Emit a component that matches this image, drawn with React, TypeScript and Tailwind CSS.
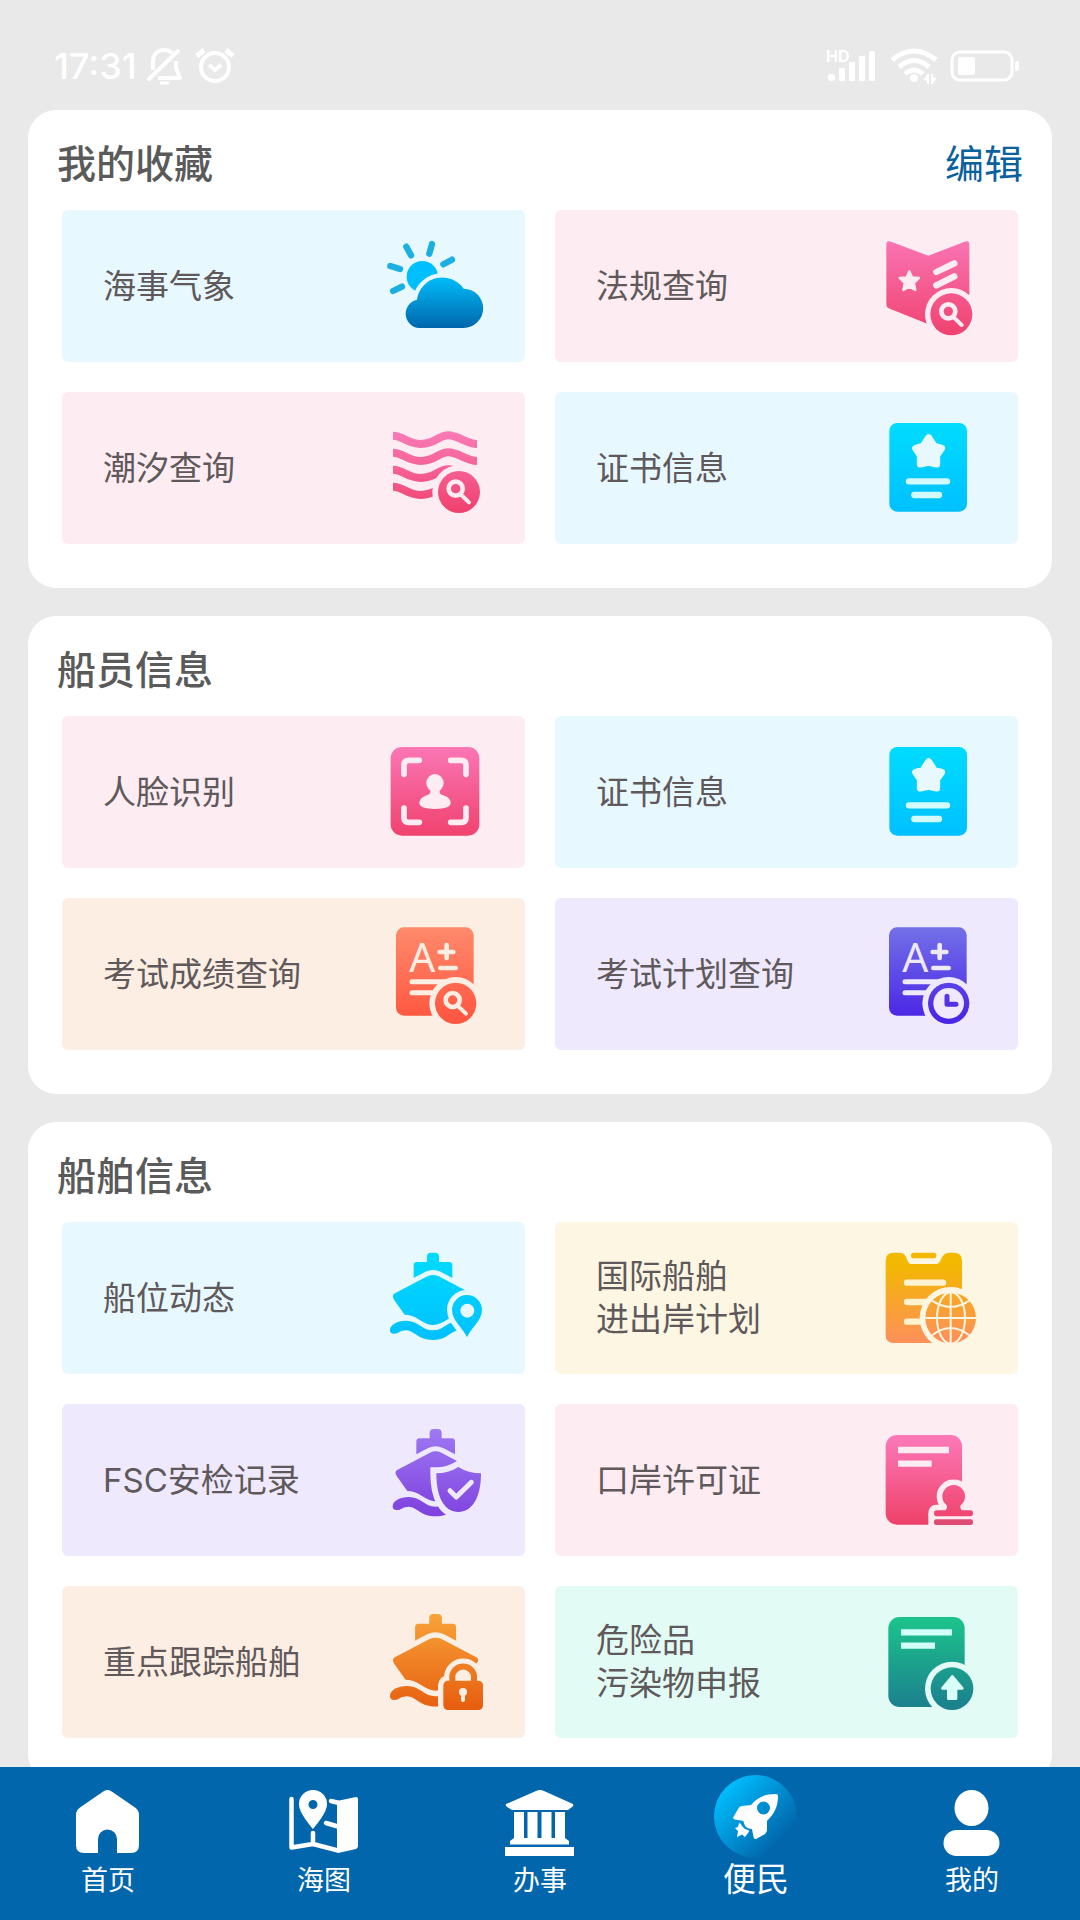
import { useId } from 'react';
import type { ReactNode } from 'react';

// tile backgrounds, also used for the gaps inside the icons
const SKY = '#e8f8ff';
const ROSE = '#fdecf2';
const PEACH = '#fdeee3';
const LILAC = '#eee9fd';
const CREAM = '#fdf6e3';
const MINT = '#e3fbf5';

type ArtProps = {
  viewBox: string;
  from: string;
  to: string;
  top: number;
  bottom: number;
  children: (fill: string) => ReactNode;
};

function Art({ viewBox, from, to, top, bottom, children }: ArtProps) {
  const id = useId();
  return (
    <svg viewBox={viewBox} className="size-[110px] shrink-0" fill="none" aria-hidden="true">
      <defs>
        <linearGradient id={id} gradientUnits="userSpaceOnUse" x1="0" x2="0" y1={top} y2={bottom}>
          <stop offset="0" stopColor={from} />
          <stop offset="1" stopColor={to} />
        </linearGradient>
      </defs>
      {children(`url(#${id})`)}
    </svg>
  );
}

function Magnifier({ x, y, color }: { x: number; y: number; color: string }) {
  return (
    <g transform={`translate(${x} ${y})`} stroke={color} strokeLinecap="round">
      <circle r="21" strokeWidth="14" />
      <path d="M17 19 L40 41" strokeWidth="12" />
    </g>
  );
}

function WeatherIcon() {
  return (
    <Art viewBox="120 63 330 330" from="#00c3ff" to="#0063a9" top={190} bottom={360}>
      {(fill) => (
        <>
          <path
            d="M276 102 L268 131 M199 110 L213 136 M151 168 L180 177 M159 243 L186 230 M310 163 L336 149"
            stroke="#1cb0e2"
            strokeWidth="19"
            strokeLinecap="round"
          />
          <circle cx="247" cy="200" r="47" fill="#00bfff" />
          <path
            d="M238 354 A43 43 0 0 1 231 269 A77 77 0 0 1 371 236 A59 59 0 0 1 370 354 Z"
            fill={fill}
            stroke={SKY}
            strokeWidth="26"
            style={{ paintOrder: 'stroke' }}
          />
        </>
      )}
    </Art>
  );
}

function LawIcon() {
  return (
    <Art viewBox="99 63 330 330" from="#f974b2" to="#f0426f" top={93} bottom={376}>
      {(fill) => (
        <>
          <path
            d="M139 104 Q139 90 153 95 L265 137 L374 95 Q388 90 388 104 V255 L330 310 L262 341 L146 295 Q139 291 139 283 Z"
            fill={fill}
          />
          <path
            d="M208 184 L216 202 L237 204 L222 219 L226 240 L208 230 L190 240 L194 219 L179 204 L200 202 Z"
            fill={ROSE}
            stroke={ROSE}
            strokeWidth="7"
            strokeLinejoin="round"
          />
          <path d="M289 186 L343 160 M289 226 L343 199" stroke={ROSE} strokeWidth="19" strokeLinecap="round" />
          <circle cx="334" cy="313" r="79" fill={ROSE} />
          <circle cx="334" cy="313" r="63" fill={fill} />
          <Magnifier x={325} y={304} color={ROSE} />
        </>
      )}
    </Art>
  );
}

function TideIcon() {
  const wave = 'c31 0 41 25 84 25 s52 -26 82 -26 s55 26 86 26';
  return (
    <Art viewBox="120 609 330 330" from="#fa7cb8" to="#f0426f" top={660} bottom={900}>
      {(fill) => (
        <>
          <path
            d={`M159 677 ${wave} M159 728 ${wave} M159 779 ${wave} M159 830 ${wave}`}
            stroke={fill}
            strokeWidth="24"
          />
          <circle cx="357" cy="846" r="80" fill={ROSE} />
          <circle cx="357" cy="846" r="63" fill={fill} />
          <Magnifier x={347} y={836} color={ROSE} />
        </>
      )}
    </Art>
  );
}

function CertificateIcon() {
  return (
    <Art viewBox="99 609 330 330" from="#00dcff" to="#00c0ff" top={639} bottom={905}>
      {(fill) => (
        <>
          <rect x="148" y="639" width="233" height="266" rx="24" fill={fill} />
          <path
            d="M266 683 L282 708 L305 715 L290 736 L290 762 L266 757 L241 762 L241 736 L227 715 L250 708 Z"
            fill={SKY}
            stroke={SKY}
            strokeWidth="21"
            strokeLinejoin="round"
          />
          <path d="M207 814 H321 M223 855 H297" stroke="#d3fbff" strokeWidth="19" strokeLinecap="round" />
        </>
      )}
    </Art>
  );
}

function FaceIcon() {
  return (
    <Art viewBox="120 81 330 330" from="#fa76b4" to="#f0426f" top={111} bottom={378}>
      {(fill) => (
        <>
          <rect x="152" y="111" width="266" height="266" rx="34" fill={fill} />
          <path
            d="M192 193 V165 Q192 151 206 151 H238 M332 151 H364 Q378 151 378 165 V193 M378 294 V323 Q378 337 364 337 H332 M238 337 H206 Q192 337 192 323 V294"
            stroke={ROSE}
            strokeWidth="17"
            strokeLinecap="round"
          />
          <ellipse cx="285" cy="219" rx="26" ry="27" fill={ROSE} />
          <path
            d="M270 236 H300 Q294 251 310 256 Q333 264 332 280 Q330 297 285 297 Q240 297 238 280 Q238 264 260 256 Q276 251 270 236 Z"
            fill={ROSE}
          />
        </>
      )}
    </Art>
  );
}

function ExamSheet({ fill, bg }: { fill: string; bg: string }) {
  return (
    <>
      <rect x="168" y="652" width="233" height="265" rx="24" fill={fill} />
      <text x="247" y="785" textAnchor="middle" fontSize="122" fill={bg} className="font-['Noto_Sans',sans-serif]">
        A
      </text>
      <path d="M320 705 V744 M299 726 H340 M301 774 H347" stroke={bg} strokeWidth="14" strokeLinecap="round" />
      <path d="M216 815 H320 M216 848 H290" stroke={bg} strokeWidth="15" strokeLinecap="round" />
      <circle cx="347" cy="880" r="79" fill={bg} />
      <circle cx="347" cy="880" r="62" fill={fill} />
    </>
  );
}

function ExamScoreIcon() {
  return (
    <Art viewBox="120 627 330 330" from="#ff8a6c" to="#ff5842" top={652} bottom={920}>
      {(fill) => (
        <>
          <ExamSheet fill={fill} bg={PEACH} />
          <Magnifier x={338} y={870} color={PEACH} />
        </>
      )}
    </Art>
  );
}

function ExamPlanIcon() {
  return (
    <Art viewBox="120 627 330 330" from="#7370e8" to="#4a26e6" top={652} bottom={925}>
      {(fill) => (
        <>
          <ExamSheet fill={fill} bg={LILAC} />
          <circle cx="347" cy="880" r="46" fill={LILAC} />
          <path d="M342 859 V883 H369" stroke={fill} strokeWidth="15" strokeLinecap="round" strokeLinejoin="round" />
        </>
      )}
    </Art>
  );
}

function Ship({ fill, bg }: { fill: string; bg: string }) {
  return (
    <>
      <path
        d="M221 175 V136 Q221 126 231 126 H261 V110 Q261 98 273 98 H285 Q297 98 297 110 V126 H327 Q337 126 337 136 V175 Z"
        fill={fill}
      />
      <path
        d="M159 232 Q157 224 165 220 L262 169 Q279 161 296 169 L393 220 Q401 224 399 232 L364 284 Q345 283 328 295 Q300 315 279 315 Q262 315 238 299 Q216 284 194 284 L162 239 Z"
        fill={fill}
        stroke={bg}
        strokeWidth="30"
        strokeLinejoin="round"
        style={{ paintOrder: 'stroke' }}
      />
      <path
        d="M150 330 C150 314 172 302 198 302 C235 302 245 331 279 331 C312 331 322 302 360 302 C386 302 405 314 405 330 L398 340 Q380 330 360 331 C328 332 325 360 279 360 C233 360 225 332 198 331 Q183 331 171 340 Q150 345 150 330 Z"
        fill={fill}
      />
    </>
  );
}

function ShipPositionIcon() {
  const pin = 'M381 352 C370 325 336 302 336 270 A45 45 0 0 1 426 270 C426 302 392 325 381 352 Z';
  return (
    <Art viewBox="120 69 330 330" from="#00dcff" to="#00c0ff" top={98} bottom={360}>
      {(fill) => (
        <>
          <Ship fill={fill} bg={SKY} />
          <path d="M350 332 L381 352 L440 352 V270 H350 Z" fill={SKY} />
          <path d={pin} fill={fill} stroke={SKY} strokeWidth="30" style={{ paintOrder: 'stroke' }} />
          <circle cx="382" cy="272" r="21" fill={SKY} />
        </>
      )}
    </Art>
  );
}

function InspectionIcon() {
  return (
    <Art viewBox="120 69 330 330" from="#9f7bf3" to="#7f42df" top={90} bottom={350}>
      {(fill) => (
        <>
          <g transform="translate(8 -17)">
            <Ship fill={fill} bg={LILAC} />
          </g>
          <path d="M318 337 L355 320 L440 260 V360 H335 Z" fill={LILAC} />
          <path
            d="M355 195 Q385 214 423 214 C423 290 395 330 355 330 S289 290 289 214 Q325 214 355 195 Z"
            fill={fill}
            stroke={LILAC}
            strokeWidth="36"
            style={{ paintOrder: 'stroke' }}
          />
          <path
            d="M330 266 L349 285 L394 241"
            stroke={LILAC}
            strokeWidth="15"
            strokeLinecap="round"
            strokeLinejoin="round"
          />
        </>
      )}
    </Art>
  );
}

function TrackedShipIcon() {
  const shackle = 'M337 292 V275 A33 33 0 0 1 402 275 V292';
  return (
    <Art viewBox="120 69 330 330" from="#f9a53a" to="#e65c0e" top={90} bottom={378}>
      {(fill) => (
        <>
          <g transform="translate(-9 -14) scale(1.06)">
            <Ship fill={fill} bg={PEACH} />
          </g>
          <path d={shackle} fill={PEACH} stroke={PEACH} strokeWidth="49" />
          <rect x="310" y="290" width="119" height="88" rx="14" fill={PEACH} stroke={PEACH} strokeWidth="32" />
          <path d={shackle} stroke={fill} strokeWidth="18" />
          <rect x="310" y="290" width="119" height="88" rx="14" fill={fill} />
          <circle cx="369" cy="324" r="12" fill={PEACH} />
          <path d="M369 326 V348" stroke={PEACH} strokeWidth="12" strokeLinecap="round" />
        </>
      )}
    </Art>
  );
}

function VoyagePlanIcon() {
  return (
    <Art viewBox="99 69 330 330" from="#f3b800" to="#fd9158" top={130} bottom={360}>
      {(fill) => (
        <>
          <path
            d="M161 98 H178 C206 98 196 132 216 132 H288 C308 132 298 98 330 98 H342 Q366 98 366 122 V369 H161 Q137 369 137 345 V122 Q137 98 161 98 Z"
            fill={fill}
          />
          <rect x="213" y="98" width="76" height="17" rx="8" fill={fill} />
          <path d="M201 188 H309 M201 246 H270 M201 305 H260" stroke="#fff3cf" strokeWidth="19" strokeLinecap="round" />
          <circle cx="332" cy="294" r="93" fill={CREAM} />
          <circle cx="332" cy="294" r="76" fill={fill} />
          <g stroke={CREAM} strokeWidth="6">
            <path d="M332 218 V370 M256 294 H408 M276 242 Q332 280 388 242 M276 346 Q332 302 388 346" />
            <ellipse cx="333" cy="294" rx="42" ry="77" />
          </g>
        </>
      )}
    </Art>
  );
}

function PermitIcon() {
  const stamp =
    'M320 856 A34 34 0 1 1 362 856 Q359 866 366 871 H392 Q399 871 399 880 Q399 889 392 889 H289 Q282 889 282 880 Q282 871 289 871 H316 Q323 866 320 856 Z';
  return (
    <Art viewBox="99 615 330 330" from="#fd78b7" to="#ee4169" top={650} bottom={914}>
      {(fill) => (
        <>
          <rect x="137" y="645" width="229" height="269" rx="34" fill={fill} />
          <path d="M174 690 H327 M174 731 H275" stroke={ROSE} strokeWidth="19" />
          <path d={stamp} fill={ROSE} stroke={ROSE} strokeWidth="34" />
          <rect x="265" y="880" width="140" height="40" fill={ROSE} />
          <path d={stamp} fill={fill} />
          <rect x="282" y="898" width="117" height="17" rx="7" fill="#dd4b74" />
        </>
      )}
    </Art>
  );
}

function DeclareIcon() {
  return (
    <Art viewBox="99 1161 330 330" from="#1cc28b" to="#1b828e" top={1200} bottom={1455}>
      {(fill) => (
        <>
          <rect x="145" y="1191" width="229" height="270" rx="34" fill={fill} />
          <path d="M183 1237 H336 M183 1277 H285" stroke="#d2fff7" strokeWidth="19" />
          <circle cx="336" cy="1406" r="81" fill={MINT} />
          <circle cx="336" cy="1406" r="64" fill={fill} />
          <path
            d="M337 1369 L367 1405 H348 V1436 H325 V1405 H307 Z"
            fill="#d8fff8"
            stroke="#d8fff8"
            strokeWidth="8"
            strokeLinejoin="round"
          />
        </>
      )}
    </Art>
  );
}

type Tile = {
  lines: string[];
  tone: string;
  icon: ReactNode;
};

type Section = {
  title: string;
  editable?: boolean;
  tiles: Tile[];
};

const sections: Section[] = [
  {
    title: '我的收藏',
    editable: true,
    tiles: [
      { lines: ['海事气象'], tone: 'bg-[#e8f8ff]', icon: <WeatherIcon /> },
      { lines: ['法规查询'], tone: 'bg-[#fdecf2]', icon: <LawIcon /> },
      { lines: ['潮汐查询'], tone: 'bg-[#fdecf2]', icon: <TideIcon /> },
      { lines: ['证书信息'], tone: 'bg-[#e8f8ff]', icon: <CertificateIcon /> },
    ],
  },
  {
    title: '船员信息',
    tiles: [
      { lines: ['人脸识别'], tone: 'bg-[#fdecf2]', icon: <FaceIcon /> },
      { lines: ['证书信息'], tone: 'bg-[#e8f8ff]', icon: <CertificateIcon /> },
      { lines: ['考试成绩查询'], tone: 'bg-[#fdeee3]', icon: <ExamScoreIcon /> },
      { lines: ['考试计划查询'], tone: 'bg-[#eee9fd]', icon: <ExamPlanIcon /> },
    ],
  },
  {
    title: '船舶信息',
    tiles: [
      { lines: ['船位动态'], tone: 'bg-[#e8f8ff]', icon: <ShipPositionIcon /> },
      { lines: ['国际船舶', '进出岸计划'], tone: 'bg-[#fdf6e3]', icon: <VoyagePlanIcon /> },
      { lines: ['FSC安检记录'], tone: 'bg-[#eee9fd]', icon: <InspectionIcon /> },
      { lines: ['口岸许可证'], tone: 'bg-[#fdecf2]', icon: <PermitIcon /> },
      { lines: ['重点跟踪船舶'], tone: 'bg-[#fdeee3]', icon: <TrackedShipIcon /> },
      { lines: ['危险品', '污染物申报'], tone: 'bg-[#e3fbf5]', icon: <DeclareIcon /> },
    ],
  },
];

function StatusBar() {
  return (
    <div className="flex h-[110px] shrink-0 items-center justify-between pt-[22px] pr-[60px] pl-[54px] text-white">
      <div className="flex items-center gap-[9px]">
        <span className="text-[36px] leading-[40px] font-medium">17:31</span>
        <svg viewBox="0 0 38 40" className="h-[40px] w-[38px]" fill="none" stroke="currentColor" strokeWidth="4" aria-hidden="true">
          <path d="M7 24 V15 C7 8 12 4 18 4 C21 4 24 5 26 7" />
          <path d="M30 15 V22 L34 32 H12" strokeLinejoin="round" />
          <path d="M32 5 L3 33" strokeLinecap="round" />
          <path d="M15 37 H22" strokeWidth="3" strokeLinecap="round" />
        </svg>
        <svg viewBox="0 0 42 40" className="h-[40px] w-[42px]" fill="none" stroke="currentColor" strokeWidth="4" aria-hidden="true">
          <circle cx="22" cy="21" r="14" />
          <path d="M4 10 L11 4 M40 10 L33 4" strokeWidth="5" />
          <path d="M16 19 L22 24 L28 19" />
        </svg>
      </div>
      <div className="flex items-center gap-[11px]">
        <svg viewBox="0 0 52 40" className="h-[40px] w-[52px]" fill="currentColor" aria-hidden="true">
          <text x="0" y="16" fontSize="16" fontWeight="700">
            HD
          </text>
          <rect x="2" y="28" width="7" height="7" rx="3" />
          <rect x="13" y="22" width="6" height="13" rx="1" />
          <rect x="23" y="16" width="6" height="19" rx="1" />
          <rect x="33" y="10" width="6" height="25" rx="1" />
          <rect x="43" y="5" width="6" height="30" rx="1" />
        </svg>
        <svg viewBox="0 0 50 40" className="h-[40px] w-[50px]" fill="none" stroke="currentColor" strokeWidth="5" aria-hidden="true">
          <path d="M3 14 Q25 -4 47 14 M10 21 Q25 8 40 21 M16 28 Q25 20 34 28" />
          <circle cx="25" cy="32" r="4" fill="currentColor" stroke="none" />
          <path d="M39 28 V38 M43 28 V38" strokeWidth="2" />
          <path d="M35 34 L38 29 V34 Z M47 32 L44 37 V32 Z" strokeWidth="1" fill="currentColor" />
        </svg>
        <svg viewBox="0 0 70 40" className="h-[40px] w-[70px]" fill="none" aria-hidden="true">
          <rect x="2" y="6" width="60" height="28" rx="8" stroke="currentColor" strokeWidth="3" />
          <rect x="8" y="11" width="17" height="18" rx="2" fill="currentColor" />
          <rect x="65" y="15" width="4" height="10" rx="2" fill="currentColor" />
        </svg>
      </div>
    </div>
  );
}

function HomeIcon() {
  return (
    <path d="M36.5 13 Q41.5 9 46.5 13 L69 28.5 Q73 31 73 36 V66 Q73 74 65 74 H51 V60 A9.5 9.5 0 0 0 32 60 V74 H18 Q10 74 10 66 V36 Q10 31 14 28.5 Z" />
  );
}

function ChartIcon() {
  return (
    <>
      <path
        d="M9.5 20 V68.5 L31 65 L56 71.5 M31 65 V54 M44 44 L56 47.5 M49 22 L57 24"
        fill="none"
        stroke="currentColor"
        strokeWidth="4.5"
        strokeLinecap="round"
        strokeLinejoin="round"
      />
      <path
        fillRule="evenodd"
        d="M31 50 C28 46 17 34 17 25 A14 14 0 0 1 45 25 C45 34 34 46 31 50 Z M31 21 A4.5 4.5 0 1 0 31 30 A4.5 4.5 0 1 0 31 21 Z"
      />
      <path d="M55 22 L74 18 Q76 18 76 20 V67 Q76 69 74 70 L56 74 L55 72 Z" />
    </>
  );
}

function HallIcon() {
  return (
    <>
      <path d="M8 25 L38 12 Q42 10 46 12 L75 25 Q76 27 74 28 L70 31 H14 L9 28 Q7 26 8 25 Z" />
      <path d="M16 33 H26 V59 H29.5 V33 H39.5 V59 H43.5 V33 H53.5 V59 H57 V33 H67 V59 L71 62 V65.5 H12 V62 L16 59 Z" />
      <rect x="7" y="68" width="69" height="9" />
    </>
  );
}

function RocketIcon() {
  return (
    <>
      <defs>
        <linearGradient id="rocket-disc" x1="0.1" y1="0.15" x2="0.8" y2="0.8">
          <stop offset="0" stopColor="#00bfff" />
          <stop offset="1" stopColor="#0166ab" />
        </linearGradient>
      </defs>
      <circle cx="41.5" cy="41.5" r="41.5" fill="url(#rocket-disc)" />
      <path
        fillRule="evenodd"
        d="M62 19 Q64 19 64 21 C64 32 60 39 53 46 V55 Q53 57 51 59 L43 63.5 Q40 65 39.5 62 L38 54 C33 54 30 51 29.5 46 L21 44.5 Q18 44 20 41 L25 32.5 Q26 31 28 31 L37 30 C44 22 51 19 62 19 Z M49.5 26.5 A6.5 6.5 0 1 0 49.5 39.5 A6.5 6.5 0 1 0 49.5 26.5 Z"
      />
      <path d="M25 48 Q27 48 28 51 Q30 54 34 55 Q36 56 34 58 L31 62 L28 59.5 L23 62 L24 56 L21 53 L24 52 Z" />
    </>
  );
}

function MeIcon() {
  return (
    <>
      <ellipse cx="41.5" cy="29" rx="17" ry="18" />
      <rect x="13.5" y="51" width="56" height="26" rx="13" />
    </>
  );
}

const navItems = [
  { label: '首页', icon: <HomeIcon /> },
  { label: '海图', icon: <ChartIcon /> },
  { label: '办事', icon: <HallIcon /> },
  { label: '便民', icon: <RocketIcon />, active: true },
  { label: '我的', icon: <MeIcon /> },
];

function BottomNav() {
  return (
    <nav className="grid h-[153px] shrink-0 grid-cols-5 bg-[#0166ab] text-white">
      {navItems.map((item) => (
        <a
          key={item.label}
          href="#"
          aria-current={item.active ? 'page' : undefined}
          className="flex flex-col items-center justify-end pb-[21px]"
        >
          <svg viewBox="0 0 84 84" className="size-[84px]" fill="currentColor" aria-hidden="true">
            {item.icon}
          </svg>
          <span className={item.active ? 'text-[33px] leading-[40px]' : 'text-[27px] leading-[36px]'}>
            {item.label}
          </span>
        </a>
      ))}
    </nav>
  );
}

function SectionCard({ title, editable, tiles }: Section) {
  return (
    <section className="rounded-[28px] bg-white px-[34px] pb-[44px]">
      <header className="-mx-[5px] flex h-[100px] items-center justify-between pt-2 text-[39px] leading-[48px]">
        <h2 className="font-medium text-[#5a5a5a]">{title}</h2>
        {editable && (
          <button type="button" className="text-[#0b609e]">
            编辑
          </button>
        )}
      </header>
      <div className="grid grid-cols-2 gap-[30px]">
        {tiles.map((tile) => (
          <button
            key={tile.lines.join('')}
            type="button"
            className={`flex h-[152px] items-center justify-between rounded-md pr-[35px] pl-[41px] text-left text-[33px] leading-[43px] text-[#5f595b] ${tile.tone}`}
          >
            <span>
              {tile.lines.map((line) => (
                <span key={line} className="block">
                  {line}
                </span>
              ))}
            </span>
            {tile.icon}
          </button>
        ))}
      </div>
    </section>
  );
}

export default function App() {
  return (
    <div className="flex h-screen flex-col bg-[#e9e9e9] font-['Inter','Noto_Sans_CJK_SC',sans-serif]">
      <StatusBar />
      <main className="flex min-h-0 flex-1 flex-col gap-7 overflow-y-auto px-7 [scrollbar-width:none]">
        {sections.map((section) => (
          <SectionCard key={section.title} {...section} />
        ))}
      </main>
      <BottomNav />
    </div>
  );
}
